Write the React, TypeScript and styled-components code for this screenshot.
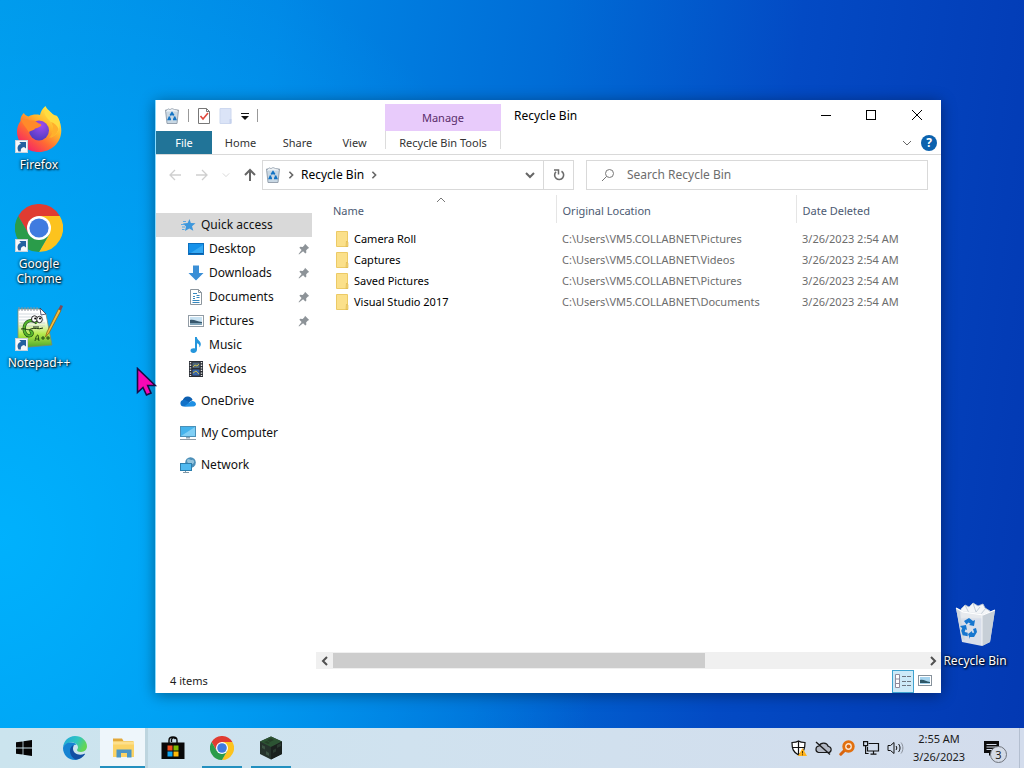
import React, { useState } from 'react'
import styled, { createGlobalStyle, css } from 'styled-components'

const colors = {
    text: '#1b1b1b',
    header: '#4c5a72',
    muted: '#6d6d6d',
    line: '#d9d9d9',
    accent: '#2390bf',
    file: '#217498',
    manage: '#e8cbfb',
    selected: '#d9d9d9'
}

const places = [
    { name: 'Desktop', icon: 'desktop', pinned: true },
    { name: 'Downloads', icon: 'downloads', pinned: true },
    { name: 'Documents', icon: 'documents', pinned: true },
    { name: 'Pictures', icon: 'pictures', pinned: true },
    { name: 'Music', icon: 'music', pinned: false },
    { name: 'Videos', icon: 'videos', pinned: false }
]

const files = [
    { name: 'Camera Roll', location: 'C:\\Users\\VM5.COLLABNET\\Pictures', deleted: '3/26/2023 2:54 AM' },
    { name: 'Captures', location: 'C:\\Users\\VM5.COLLABNET\\Videos', deleted: '3/26/2023 2:54 AM' },
    { name: 'Saved Pictures', location: 'C:\\Users\\VM5.COLLABNET\\Pictures', deleted: '3/26/2023 2:54 AM' },
    { name: 'Visual Studio 2017', location: 'C:\\Users\\VM5.COLLABNET\\Documents', deleted: '3/26/2023 2:54 AM' }
]

/* ---------- icons ---------- */

const ShortcutMark = () => (
    <g>
        <rect x="0.5" y="35.5" width="12" height="12" fill="#f6f8fa" stroke="#c9d3dc" />
        <path d="M3.500 46.500c-2-4-.5-7 2.500-7.500L4.300 37H11v6.500L9 42c-2 .5-3.500 1.500-3.200 4.500z" fill="#23609f" />
    </g>
)

const FirefoxIcon = () => (
    <svg width="48" height="48" viewBox="0 0 48 48">
        <defs>
            <linearGradient id="ffBody" x1="0.85" y1="0.1" x2="0.2" y2="0.95">
                <stop offset="0" stopColor="#fff04a" />
                <stop offset="0.35" stopColor="#ffb32c" />
                <stop offset="0.65" stopColor="#ff6a33" />
                <stop offset="1" stopColor="#f5206a" />
            </linearGradient>
            <radialGradient id="ffGlobe" cx="0.6" cy="0.25" r="0.8">
                <stop offset="0" stopColor="#a04bf0" />
                <stop offset="1" stopColor="#4b3bbd" />
            </radialGradient>
        </defs>
        <path d="M30.500 1c-3 2.500-5 6-5.500 9-4-1-8-.5-11.500 1.500C11 10.800 9.500 9.500 8.800 8 6 10.500 5.300 13.500 5.500 16 2.800 19.500 2 23.500 2 26.500 2 38.500 12 47 24 47s22.300-9 22.300-21.500c0-6-2-11.500-5-14.500.2 1.500.2 2.500 0 3.500C38.500 7.500 32.500 6 30.500 1z" fill="url(#ffBody)" />
        <path d="M30 3c-2 5 1 9 5 13 4 5 4 12 1 16.500 6.500-3 9.500-9 8.500-16-.5-2-1.200-4-2.500-5.500C40.500 10 33 9 30 3z" fill="#ffdc40" />
        <path d="M36 17c3 5 2.500 12-2 16 5-1 8-4 9.500-9-1-3-4-6-7.500-7z" fill="#ffb02c" />
        <circle cx="24" cy="25.500" r="10" fill="url(#ffGlobe)" />
        <path d="M6 15c4-1.500 7-1 9 .8 3-.8 5.500-.2 7 1.500 1.800 1.600 4 1.500 4.200 2.400.3 1.700-3.500 3.200-6 3.800-.8 1.600-3.500 2-6.500 3.500C11 22 8 20 6 15z" fill="#ff8a2a" />
        <ShortcutMark />
    </svg>
)

const ChromeLogo = () => (
    <g>
        <path d="M3.200 12A24 24 0 0 1 44.800 12L24 13 13.600 30z" fill="#e03c31" />
        <path d="M44.800 12A24 24 0 0 1 24 48L34.400 30 24 12z" fill="#fcc31e" />
        <path d="M24 48A24 24 0 0 1 3.200 12L13.600 30l20.800 0z" fill="#2a9c4a" />
        <circle cx="24" cy="24" r="12" fill="#fff" />
        <circle cx="24" cy="24" r="9.600" fill="#3f7be0" />
    </g>
)

const ChromeIcon = () => (
    <svg width="48" height="48" viewBox="0 0 48 48">
        <ChromeLogo />
        <ShortcutMark />
    </svg>
)

const NotepadIcon = () => (
    <svg width="48" height="48" viewBox="0 0 48 48">
        <defs>
            <linearGradient id="npPage" x1="0" y1="0" x2="0" y2="1">
                <stop offset="0.3" stopColor="#ffffff" />
                <stop offset="0.65" stopColor="#b5ea4c" />
                <stop offset="1" stopColor="#4fa82a" />
            </linearGradient>
        </defs>
        <path d="M3 6h23l5 5 6 31-28 2.500L3 40z" fill="url(#npPage)" stroke="#7a8a70" strokeWidth="0.8" />
        <path d="M25 5l6 6-5 1z" fill="#fff" stroke="#335" strokeWidth="0.8" />
        <path d="M4 11h20M4 14h24M4 17h25M4 20h26M4 23h26" stroke="#c0cad2" strokeWidth="0.7" />
        <path d="M4 4v4M7 4v4M10 4v4M13 4v4M16 4v4M19 4v4M22 4v4" stroke="#8b93a0" strokeWidth="1" />
        <path d="M22 20c-4-4-11-3-12.500 3-1.500 6 2 11 6 9.500 3-1.500 1.500-5-1-4" fill="none" stroke="#1c4a12" strokeWidth="3.2" />
        <path d="M22 20c-4-4-11-3-12.500 3-1.500 6 2 11 6 9.500 3-1.500 1.500-5-1-4" fill="none" stroke="#55b52e" strokeWidth="2" />
        <path d="M6 26c5-1 6 2 10 0s7 1 12-1M18 24h6" stroke="#17300f" strokeWidth="1" fill="none" />
        <ellipse cx="19.500" cy="16" rx="3" ry="3.200" fill="#fff" stroke="#111" strokeWidth="0.9" />
        <ellipse cx="24.500" cy="16.500" rx="2.800" ry="3.200" fill="#fff" stroke="#111" strokeWidth="0.9" />
        <circle cx="20.200" cy="15.500" r="1" />
        <circle cx="25" cy="15.500" r="1" />
        <path d="M20 38c1-5 2-6 3-6l1 6M21 36h3M26 35h4M28 33v4M31 35h4M33 33v4" stroke="#17420f" strokeWidth="0.9" fill="none" />
        <path d="M32 29L43.500 6l2.500 1.500L34 30l-3.500 4z" fill="#f2bd3f" stroke="#8a6414" strokeWidth="0.8" />
        <path d="M43.500 6l2-4 2.500 1-2 4.500z" fill="#7d4a58" />
        <ShortcutMark />
    </svg>
)

const BigBinIcon = () => (
    <svg width="48" height="48" viewBox="0 0 48 48">
        <path d="M10 8l4-4 4 2 4-4 5 3 5-2 2 4 5 3-3 7H10z" fill="#f4f6f8" stroke="#c3ccd6" strokeWidth="0.8" />
        <path d="M14 4l4 8M22 2l3 9 4-5M35 7l-5 6" stroke="#bcc7d3" strokeWidth="0.9" fill="none" />
        <path d="M5 7l7 3 22 3 10-4-5 32-8 4-20-4z" fill="#e6e9ed" fillOpacity="0.94" />
        <path d="M5 7l3 1 6 31-3-1z" fill="#cfd7df" />
        <path d="M31 14l13-5-5 32-8 4z" fill="#c7cfd7" />
        <path d="M5 7l7 4 20 3 12-5" fill="none" stroke="#fff" strokeWidth="1.2" />
        <path d="M31 14v30" stroke="#f4f6f8" />
        <g fill="#1676cf">
            <path d="M13 20l5-3 4 3 2-1-1 6-5-1 1.500-1.300-2-1.200-2 2z" />
            <path d="M9 25l6-1 1 5-1.500-.8-.8 2.800 3 .8v3.500l-5-1-1.500-4.500 1-2.500z" />
            <path d="M17 33l4-3 .2 1.800h2L22 28l3-1 1 4-3 5h-4v2z" />
        </g>
    </svg>
)

const BinIcon = () => (
    <svg width="16" height="16" viewBox="0 0 16 16">
        <path d="M1.500 2h13l-1.500 13.500H3z" fill="#c9d8e4" stroke="#8e9ba8" strokeWidth="0.9" />
        <path d="M1.500 3.500L4 .8l2 .8L8 .5l2.500 1 2 .3 2 1.700" fill="#eef2f5" stroke="#9aa6b2" strokeWidth="0.8" />
        <path d="M6.300 7.500L8 5l1.700 2.500M10.300 8.500l1.200 2.800H9M7 11.300H4.500l1.200-2.800" fill="none" stroke="#1273c4" strokeWidth="1.9" />
    </svg>
)

const FolderIcon = () => (
    <svg width="14" height="16" viewBox="0 0 14 16">
        <path d="M1.500.5h11v15h-11z" fill="#fbe08a" stroke="#ecca66" />
        <path d="M11.500 10l1.500 1.500v4h-2z" fill="#f6d572" stroke="#dcb54a" strokeWidth="0.6" />
    </svg>
)

const PinIcon = () => (
    <svg width="12" height="12" viewBox="0 0 12 12">
        <path d="M7 .8L11.200 5l-1.200.4-1.800 1.900.1 2.400-1 .8-2.200-2.300L1 11.500.6 11 3.600 7 1.400 4.800l.8-1 2.500.1L6.600 2z" fill="#8d9398" />
    </svg>
)

const SideIcon = ({ name }: { name: string }) => (
    <svg width="16" height="16" viewBox="0 0 16 16">
        {name === 'quick' && <g>
            <path d="M9.500 2l1.300 4 4.700.2-3.500 3 1.300 4.500-4-2.300L5 14l1-4.500-3-3 4.700-.4z" fill="#3d97dc" />
            <path d="M6 4.500H3M4 7.500H1M5 10H2M4.500 12.500H2" stroke="#5ba9e4" strokeWidth="1" />
        </g>}
        {name === 'desktop' && <g>
            <rect x="0.5" y="2.5" width="15" height="11" fill="#1692ea" stroke="#0d6fbe" />
            <path d="M1 13L15 4v9z" fill="#35a9f3" />
            <path d="M1 12.500h14" stroke="#0b5da5" />
        </g>}
        {name === 'downloads' && <path d="M5 .5h6V8h4.500L8 15.500.5 8H5z" fill="#3b8fd6" />}
        {name === 'documents' && <g>
            <path d="M2.500.5h8l3 3v12h-11z" fill="#fff" stroke="#8c969e" />
            <path d="M10.500.5v3h3" fill="none" stroke="#8c969e" />
            <path d="M5 4.500h4M5 7.500h2M8.500 6.500h3M8.500 8.500h3M5 9.500h2M4.500 11.500h7M4.500 13.500h7" stroke="#3687bd" />
        </g>}
        {name === 'pictures' && <g>
            <rect x="0.5" y="2.5" width="15" height="11" fill="#fff" stroke="#929ca5" />
            <rect x="2" y="4" width="12" height="8" fill="#c8e2f2" />
            <path d="M2 7c4-1 7 2 12 2v1H2z" fill="#37576d" />
            <path d="M2 10h12v2H2z" fill="#7fa3b8" />
        </g>}
        {name === 'music' && <path d="M7 0h1.800c.2 3 4 3.800 4 7 0 1.500-.6 2.600-1.500 3.600.6-2.500-.5-3.800-2.300-4.400V12.500C9 14.500 7.500 16 5.500 16S2.500 15 2.500 13.500 4.500 11 7 11.500z" fill="#2596dc" />}
        {name === 'videos' && <g>
            <rect x="1" y="0" width="14" height="16" fill="#2b2f36" />
            <path d="M2.500 1v14M13.500 1v14" stroke="#e6e6e6" strokeWidth="1.4" strokeDasharray="1.3 1.3" />
            <rect x="4.5" y="1.5" width="7" height="5.5" fill="#50687c" />
            <rect x="4.5" y="8.5" width="7" height="6" fill="#3865a8" />
            <path d="M5 6l2-2 2 1 2-2M5 12l3-2 3 3" stroke="#c9b94c" fill="none" />
        </g>}
        {name === 'onedrive' && <g>
            <path d="M2.500 8c.5-3 3-4.800 5.500-4.500 2 .1 4 1.500 4.600 3.500L8 10z" fill="#0d5fb0" />
            <path d="M3.500 13.500a3.300 3.300 0 0 1-.5-6.500c2-.3 3.500.5 5 1.500l5 4.500z" fill="#1272c8" />
            <path d="M4 13.500l6-4.500c1.500-1.800 5.500-1 6 2 0 1.600-1.300 2.500-2.500 2.500z" fill="#1f90e4" />
        </g>}
        {name === 'computer' && <g>
            <rect x="0.5" y="1.5" width="15" height="10" fill="#45b3ec" stroke="#4a90b8" />
            <path d="M1 11L15 2v9z" fill="#80cff5" />
            <path d="M6 12h4v1.500H6z" fill="#8ea4b2" />
            <path d="M0 14.500h16" stroke="#8b9aa5" />
        </g>}
        {name === 'network' && <g>
            <circle cx="10.500" cy="5.500" r="5.300" fill="#4c8fb8" />
            <path d="M7 3c2-2 3 0 4 0s2-1 3 1-2 4-4 3-3-1-3-4z" fill="#93c3dc" />
            <rect x="0.5" y="6.5" width="11" height="7" fill="#4fb9f0" stroke="#2c7fae" />
            <path d="M3 15.500h6M5.500 14v2" stroke="#7f98a8" />
        </g>}
    </svg>
)

const EdgeIcon = () => (
    <svg width="24" height="24" viewBox="0 0 24 24">
        <defs>
            <linearGradient id="edgeTop" x1="0" y1="0" x2="1" y2="0.400">
                <stop offset="0" stopColor="#1fa5dd" />
                <stop offset="0.600" stopColor="#2fc5c0" />
                <stop offset="1" stopColor="#63d655" />
            </linearGradient>
        </defs>
        <path d="M0 11.500C.5 5 5.500 0 12 0c7 0 12 5 12 10.300 0 3.500-2.500 5.700-6 5.700-2.500 0-4-1-4-2 0-.7 1-1 1-2.700C15 9 12.500 6.500 9 6.500c-4 0-8 2-9 5z" fill="url(#edgeTop)" />
        <path d="M0 12c.5-3.500 4-5.500 8-5.500 2.500 0 4.500.8 5.600 2.200-3-.5-5.100 2-5.100 5.300 0 5 4 9 10 7.300C16.500 23 14.500 24 12 24 5 24 0 18.500 0 12z" fill="#1683d2" />
        <path d="M9.500 9.500C5 13 7 21 12.500 23.500c4 .2 7.500-2 9.500-5.200.3-.6-.1-.8-.6-.5-5.200 2.400-11.400 0-11.400-5.300 0-1.200.3-2.200 1-3z" fill="#124fa3" />
    </svg>
)

const ExplorerIcon = () => (
    <svg width="24" height="24" viewBox="0 0 24 24">
        <path d="M2 2.500h9L12.500 5H22v5H2z" fill="#e2a83a" />
        <path d="M2 5.500h21v15.500H2z" fill="#fbd365" />
        <path d="M2 5.500h21v3H2z" fill="#fde08d" />
        <path d="M5.500 21.500v-8h15v8h-4.500V17h-6v4.500z" fill="#4b95c4" />
    </svg>
)

const StoreIcon = () => (
    <svg width="24" height="24" viewBox="0 0 24 24">
        <path d="M8 7V4.500C8 2 9.500 1 12 1s4 1 4 3.500V7M10.500 6V3.500C11 2 13 1 14.500 3" fill="none" stroke="#080808" strokeWidth="1.400" />
        <path d="M0.500 6.500h23v16.500h-23z" fill="#080808" />
        <path d="M6.500 9.500h5v5h-5z" fill="#f05022" />
        <path d="M12.500 9.500h5v5h-5z" fill="#7fba00" />
        <path d="M6.500 15.500h5v5h-5z" fill="#10a5ef" />
        <path d="M12.500 15.500h5v5h-5z" fill="#ffba08" />
    </svg>
)

const BlockIcon = () => (
    <svg width="24" height="24" viewBox="0 0 24 24">
        <path d="M12 0.500l11 5V18l-11 5.500L1 18V5.500z" fill="#25332c" />
        <path d="M12 .5l11 5-11 5.500L1 5.500z" fill="#2c5433" />
        <path d="M12 11v12.500L23 18V5.500z" fill="#1a211e" />
        <path d="M3 9l3 1.500v3L3 12zM7 15l3 2v3l-3-1.500z" fill="#3b5443" />
        <path d="M14 14l3-1.500v3L14 17zM18 9l4-2v3l-4 2z" fill="#2a3a30" />
        <path d="M8 4l4-2 3 2-4 2zM5 6l3-1 3 2-2 1z" fill="#243f28" />
    </svg>
)

const WindowsIcon = () => (
    <svg width="16" height="16" viewBox="0 0 16 16">
        <path d="M0 2.300L6.600 1.400V7.600H0zM7.400 1.300L16 0v7.600H7.400zM0 8.400h6.600v6.200L0 13.700zM7.400 8.400H16V16l-8.600-1.300z" fill="#050505" />
    </svg>
)

const CursorIcon = () => (
    <svg width="22" height="30" viewBox="0 0 22 30">
        <path d="M1.500 1.500v24l5.500-5 3.500 7.500 4.500-2-3.300-7.500h7.500z" fill="#f908b4" stroke="#1b0b45" strokeWidth="1.600" />
    </svg>
)

const ArrowIcon = ({ turn = 0 }: { turn?: number }) => (
    <svg width="14" height="14" viewBox="0 0 14 14">
        <path d="M7 13V2M2 7l5-5 5 5" transform={`rotate(${turn} 7 7)`} fill="none" stroke="currentColor" strokeWidth={turn ? 1.3 : 2} />
    </svg>
)

const ChevronIcon = ({ turn = 0, size = 10, weight = 1 }: { turn?: number; size?: number; weight?: number }) => (
    <svg width={size} height={size} viewBox="0 0 10 10">
        <path d="M1 3l4 4 4-4" transform={`rotate(${turn} 5 5)`} fill="none" stroke="currentColor" strokeWidth={weight} />
    </svg>
)

/* ---------- page ---------- */

function App() {
    const [view, setView] = useState('details')
    const [search, setSearch] = useState('')

    return (
        <Desktop>
            <GlobalStyle />
            <DesktopIcons>
                <Shortcut><FirefoxIcon /><span>Firefox</span></Shortcut>
                <Shortcut><ChromeIcon /><span>Google Chrome</span></Shortcut>
                <Shortcut><NotepadIcon /><span>Notepad++</span></Shortcut>
            </DesktopIcons>
            <BinCorner>
                <Shortcut><BigBinIcon /><span>Recycle Bin</span></Shortcut>
            </BinCorner>

            <Window>
                <TitleBar>
                    <QuickTools>
                        <BinIcon />
                        <Divider />
                        <ToolButton aria-label="Properties">
                            <svg width="14" height="16" viewBox="0 0 14 16">
                                <path d="M1.500.5h8l3 3v12h-11z" fill="#fff" stroke="#777" />
                                <path d="M9.500.5v3h3" fill="none" stroke="#777" />
                                <path d="M3.500 8l2.500 3 5-6" fill="none" stroke="#e0483c" strokeWidth="1.600" />
                            </svg>
                        </ToolButton>
                        <ToolButton aria-label="New folder">
                            <svg width="14" height="16" viewBox="0 0 14 16">
                                <path d="M1 .5h11v15H1z" fill="#dbe4f7" stroke="#cdd8ef" />
                                <path d="M10.500 11h2v4.500h-2z" fill="#c4d1ec" />
                            </svg>
                        </ToolButton>
                        <ToolButton aria-label="Customize toolbar">
                            <svg width="8" height="8" viewBox="0 0 8 8">
                                <path d="M0 1.500h8" stroke="#111" />
                                <path d="M0 4h8L4 8z" fill="#111" />
                            </svg>
                        </ToolButton>
                        <Divider />
                    </QuickTools>
                    <ManageTab>Manage</ManageTab>
                    <WindowTitle>Recycle Bin</WindowTitle>
                    <CaptionButtons>
                        <CaptionButton aria-label="Minimize">
                            <svg width="12" height="12" viewBox="0 0 12 12"><path d="M1 5.500h10" stroke="#000" /></svg>
                        </CaptionButton>
                        <CaptionButton aria-label="Maximize">
                            <svg width="12" height="12" viewBox="0 0 12 12"><rect x="0.5" y="0.5" width="9" height="9" fill="none" stroke="#000" /></svg>
                        </CaptionButton>
                        <CaptionButton aria-label="Close">
                            <svg width="12" height="12" viewBox="0 0 12 12"><path d="M0 0l10 10M10 0L0 10" stroke="#000" /></svg>
                        </CaptionButton>
                    </CaptionButtons>
                </TitleBar>

                <Ribbon>
                    <RibbonTab $file>File</RibbonTab>
                    <RibbonTab>Home</RibbonTab>
                    <RibbonTab>Share</RibbonTab>
                    <RibbonTab>View</RibbonTab>
                    <RibbonTab $tools>Recycle Bin Tools</RibbonTab>
                    <RibbonEnd>
                        <ToolButton aria-label="Expand the ribbon"><ChevronIcon /></ToolButton>
                        <HelpButton aria-label="Help">?</HelpButton>
                    </RibbonEnd>
                </Ribbon>

                <AddressRow>
                    <NavButtons>
                        <ToolButton $dim aria-label="Back"><ArrowIcon turn={-90} /></ToolButton>
                        <ToolButton $dim aria-label="Forward"><ArrowIcon turn={90} /></ToolButton>
                        <ToolButton $dim aria-label="Recent locations"><ChevronIcon size={8} /></ToolButton>
                        <ToolButton aria-label="Up"><ArrowIcon /></ToolButton>
                    </NavButtons>
                    <AddressBox>
                        <BinIcon />
                        <ChevronIcon turn={-90} size={8} weight={2} />
                        <Crumb>Recycle Bin</Crumb>
                        <ChevronIcon turn={-90} size={8} weight={2} />
                        <DropButton aria-label="Previous locations"><ChevronIcon weight={2} /></DropButton>
                    </AddressBox>
                    <RefreshButton aria-label="Refresh">
                        <svg width="12" height="12" viewBox="0 0 12 12">
                            <path d="M8.500 2.200A4.500 4.500 0 1 1 3 2.800" fill="none" stroke="#6b6b6b" strokeWidth="1.600" />
                            <path d="M1 1h4.500v4.500" fill="none" stroke="#6b6b6b" strokeWidth="1.500" />
                        </svg>
                    </RefreshButton>
                    <SearchBox>
                        <svg width="14" height="14" viewBox="0 0 14 14">
                            <circle cx="8.500" cy="5.500" r="4" fill="none" stroke="#777" />
                            <path d="M5.500 8.500L1 13" stroke="#777" />
                        </svg>
                        <input aria-label="Search Recycle Bin" placeholder="Search Recycle Bin" value={search}
                            onChange={e => setSearch(e.target.value)} />
                    </SearchBox>
                </AddressRow>

                <Body>
                    <SideBar>
                        <SideLink href="#quick" $active><SideIcon name="quick" /><span>Quick access</span></SideLink>
                        {places.map(p => (
                            <SideLink href={`#${p.icon}`} $child key={p.name}>
                                <SideIcon name={p.icon} /><span>{p.name}</span>
                                {p.pinned && <PinIcon />}
                            </SideLink>
                        ))}
                        <SideLink href="#onedrive" $root><SideIcon name="onedrive" /><span>OneDrive</span></SideLink>
                        <SideLink href="#computer" $root><SideIcon name="computer" /><span>My Computer</span></SideLink>
                        <SideLink href="#network" $root><SideIcon name="network" /><span>Network</span></SideLink>
                    </SideBar>
                    <Content>
                        <FileTable>
                            <colgroup>
                                <NameCol />
                                <LocationCol />
                                <col />
                            </colgroup>
                            <thead>
                                <tr>
                                    <th>Name<SortMark><ChevronIcon turn={180} /></SortMark></th>
                                    <th>Original Location</th>
                                    <th>Date Deleted</th>
                                </tr>
                            </thead>
                            <tbody>
                                {files.map(f => (
                                    <tr key={f.name}>
                                        <td><FileName><FolderIcon />{f.name}</FileName></td>
                                        <td>{f.location}</td>
                                        <td>{f.deleted}</td>
                                    </tr>
                                ))}
                            </tbody>
                        </FileTable>
                        <ScrollBar>
                            <ScrollButton aria-label="Scroll left"><ChevronIcon turn={90} weight={2} /></ScrollButton>
                            <ScrollTrack><ScrollThumb /></ScrollTrack>
                            <ScrollButton aria-label="Scroll right"><ChevronIcon turn={-90} weight={2} /></ScrollButton>
                        </ScrollBar>
                    </Content>
                </Body>

                <StatusBar>
                    <span>4 items</span>
                    <ViewButtons>
                        <ViewButton aria-label="Details" $on={view === 'details'} onClick={() => setView('details')}>
                            <svg width="18" height="14" viewBox="0 0 18 14">
                                <path d="M1.500.5h4v13h-4zM1.500 5h4M1.500 9.500h4" fill="#fff" stroke="#8f8a9c" />
                                <path d="M8 2.500h4M13 2.500h4M8 7.500h4M13 7.500h4M8 11.500h4M13 11.500h4" stroke="#6d7580" />
                            </svg>
                        </ViewButton>
                        <ViewButton aria-label="Large icons" $on={view === 'large'} onClick={() => setView('large')}>
                            <svg width="14" height="12" viewBox="0 0 14 12">
                                <rect x="0.5" y="0.5" width="13" height="10" fill="#fff" stroke="#87929c" />
                                <rect x="2" y="2" width="10" height="7" fill="#a5d3ee" />
                                <path d="M2 5c4-1 6 2 10 2v1H2z" fill="#2c5668" />
                            </svg>
                        </ViewButton>
                    </ViewButtons>
                </StatusBar>
            </Window>

            <Pointer><CursorIcon /></Pointer>

            <TaskBar>
                <StartButton aria-label="Start"><WindowsIcon /></StartButton>
                <TaskButton aria-label="Microsoft Edge"><EdgeIcon /></TaskButton>
                <TaskButton aria-label="File Explorer" $active><ExplorerIcon /></TaskButton>
                <TaskButton aria-label="Microsoft Store"><StoreIcon /></TaskButton>
                <TaskButton aria-label="Google Chrome" $running>
                    <svg width="24" height="24" viewBox="0 0 48 48"><ChromeLogo /></svg>
                </TaskButton>
                <TaskButton aria-label="Game" $running><BlockIcon /></TaskButton>
                <Tray>
                    <TrayButton aria-label="Security">
                        <svg width="16" height="16" viewBox="0 0 16 16">
                            <path d="M7.500 1C9.500 2.500 12 2.500 14 2.500c0 6-1 9.500-6.500 12.500C2 12 1 8.500 1 2.500c2 0 4.500 0 6.500-1.500zM7.500 1v14M1 7.500h13" fill="#fff" stroke="#111" strokeWidth="1.200" />
                            <path d="M11.500 8l4.500 8H7z" fill="#ffb41f" />
                            <path d="M11.500 11v2.500M11.500 14.300v1" stroke="#4b3300" />
                        </svg>
                    </TrayButton>
                    <TrayButton aria-label="OneDrive offline">
                        <svg width="18" height="16" viewBox="0 0 18 16">
                            <path d="M4.500 12.500h9.500a3 3 0 0 0 .3-6A5 5 0 0 0 5 6a3.300 3.300 0 0 0-.5 6.500z" fill="#b2b8c4" stroke="#1a1a1a" strokeWidth="1.200" />
                            <path d="M2 2l14 12.500" stroke="#1a1a1a" strokeWidth="1.400" />
                        </svg>
                    </TrayButton>
                    <TrayButton aria-label="Search tool">
                        <svg width="16" height="16" viewBox="0 0 16 16">
                            <path d="M6.500 9.500L1.800 14.200" stroke="#d8640f" strokeWidth="3" strokeLinecap="round" />
                            <circle cx="9.500" cy="6.500" r="4.800" fill="#fbe6d0" stroke="#e2700f" strokeWidth="2.800" />
                            <circle cx="9.500" cy="6.500" r="2" fill="#d8640f" />
                        </svg>
                    </TrayButton>
                    <TrayButton aria-label="Network">
                        <svg width="17" height="16" viewBox="0 0 17 16">
                            <path d="M5.500 3.500h10v7.500h-11V7M10.500 11v3M7.500 14.200h6" fill="none" stroke="#111" strokeWidth="1.200" />
                            <path d="M.6 1.600h4v4h-4zM2.600 6v8M2.600 13.500h3" fill="none" stroke="#111" strokeWidth="1.200" />
                        </svg>
                    </TrayButton>
                    <TrayButton aria-label="Volume">
                        <svg width="17" height="16" viewBox="0 0 17 16">
                            <path d="M1 5.500h2.500L7 2.500v11L3.500 10.500H1z" fill="none" stroke="#111" />
                            <path d="M9 6c1 1.200 1 2.800 0 4M11.500 4c2 2.300 2 5.700 0 8" fill="none" stroke="#111" />
                            <path d="M14 2.500c2.500 3 2.500 8 0 11" fill="none" stroke="#8b919b" />
                        </svg>
                    </TrayButton>
                    <Clock><span>2:55 AM</span><span>3/26/2023</span></Clock>
                    <NoticeButton aria-label="Notifications">
                        <svg width="18" height="17" viewBox="0 0 18 17">
                            <path d="M1 1h15v12H9l-3 3v-3H1z" fill="#0c0c0c" />
                            <path d="M3.500 4.500h10M3.500 7h10M3.500 9.500h7" stroke="#d4dbe8" />
                        </svg>
                        <NoticeCount>3</NoticeCount>
                    </NoticeButton>
                </Tray>
            </TaskBar>
        </Desktop>
    )
}

const GlobalStyle = createGlobalStyle`
* { box-sizing: border-box; }
body {
    margin: 0;
    overflow: hidden;
}
body, button, input, table {
    font-family: "Noto Sans", "Open Sans", sans-serif;
    font-size: 12px;
    line-height: 16px;
    color: ${colors.text};
}
button {
    border: none;
    padding: 0;
    background: none;
}
svg { flex: none; display: block; }
`

const Desktop = styled.main`
position: relative;
display: flex;
flex-direction: column;
justify-content: flex-end;
height: 100vh;
background:
    radial-gradient(ellipse 80% 110% at 0% 70%, rgba(0, 180, 255, .9), rgba(0, 150, 245, 0) 75%),
    linear-gradient(97deg, #0098ea 0%, #0088e6 25%, #006cd6 50%, #034ac4 72%, #0338b2 100%);
`

const DesktopIcons = styled.div`
position: absolute;
left: 1px;
top: 102px;
display: grid;
grid-auto-rows: 99px;
`

const BinCorner = styled.div`
position: absolute;
right: 11px;
bottom: 97px;
`

const Shortcut = styled.button`
display: flex;
flex-direction: column;
align-items: center;
justify-content: flex-start;
gap: 4px;
width: 76px;
padding: 3px 0;
color: #fff;
line-height: 15px;
text-align: center;
text-shadow: 1px 1px 2px #000, 0 0 3px rgba(0, 0, 0, .9);
span { padding: 0 4px; }
`

const Window = styled.section`
position: absolute;
left: 155px;
right: 83px;
top: 100px;
bottom: 75px;
display: flex;
flex-direction: column;
background: #fff;
border-left: 1px solid #8adcff;
box-shadow: 0 2px 14px rgba(0, 0, 0, .4);
`

const TitleBar = styled.header`
display: flex;
height: 31px;
`

const QuickTools = styled.div`
display: flex;
align-items: center;
gap: 8px;
width: 229px;
padding-left: 8px;
`

const Divider = styled.span`
width: 1px;
height: 13px;
background: #999;
`

const ToolButton = styled.button<{ $dim?: boolean }>`
display: flex;
align-items: center;
justify-content: center;
color: ${p => p.$dim ? '#cfcfcf' : '#666'};
`

const ManageTab = styled.div`
width: 116px;
margin-top: 4px;
background: ${colors.manage};
color: #5a2d6b;
font-size: 11px;
line-height: 28px;
text-align: center;
`

const WindowTitle = styled.div`
padding-left: 13px;
color: #000;
line-height: 32px;
`

const CaptionButtons = styled.div`
display: flex;
margin-left: auto;
`

const CaptionButton = styled.button`
display: flex;
align-items: center;
justify-content: center;
width: 46px;
&:hover { background: #e5e5e5; }
`

const Ribbon = styled.nav`
display: flex;
height: 24px;
border-bottom: 1px solid ${colors.line};
`

const RibbonTab = styled.button<{ $file?: boolean; $tools?: boolean }>`
width: 57px;
color: #333;
font-size: 11px;
${p => p.$file && css`
    width: 56px;
    background: ${colors.file};
    color: #fff;
`}
${p => p.$tools && css`
    width: 116px;
    height: 18px;
    padding-top: 6px;
    margin-left: 2px;
    line-height: 12px;
    white-space: nowrap;
    border: solid #dcdcdc;
    border-width: 0 1px;
`}
`

const RibbonEnd = styled.div`
display: flex;
align-items: center;
gap: 9px;
margin-left: auto;
padding-right: 4px;
`

const HelpButton = styled.button`
width: 16px;
height: 16px;
border-radius: 50%;
background: #0b62ae;
color: #fff;
font-weight: 700;
`

const AddressRow = styled.div`
display: flex;
align-items: center;
height: 40px;
padding-right: 13px;
`

const NavButtons = styled.div`
display: flex;
align-items: center;
gap: 13px;
width: 106px;
padding-left: 12px;
`

const AddressBox = styled.div`
display: flex;
align-items: center;
flex: 278;
gap: 6px;
height: 30px;
padding-left: 2px;
border: 1px solid ${colors.line};
color: #666;
`

const Crumb = styled.button`
color: #000;
`

const DropButton = styled.button`
display: flex;
margin-left: auto;
padding: 8px;
color: inherit;
`

const RefreshButton = styled.button`
display: flex;
align-items: center;
justify-content: center;
width: 30px;
height: 30px;
border: 1px solid ${colors.line};
border-left: none;
`

const SearchBox = styled.label`
display: flex;
align-items: center;
flex: 326;
gap: 12px;
height: 30px;
margin-left: 12px;
padding-left: 14px;
border: 1px solid ${colors.line};
input {
    flex: 1;
    min-width: 0;
    border: none;
    outline: none;
    background: none;
    padding: 0;
}
input::placeholder { color: #6d6d6d; }
`

const Body = styled.div`
display: flex;
flex: 1;
min-height: 0;
`

const SideBar = styled.nav`
display: flex;
flex-direction: column;
width: 160px;
padding-top: 18px;
`

const SideLink = styled.a<{ $active?: boolean; $child?: boolean; $root?: boolean }>`
display: flex;
align-items: center;
gap: 5px;
height: 24px;
padding-left: ${p => p.$child ? 32 : 24}px;
margin-right: 4px;
margin-top: ${p => p.$root ? 8 : 0}px;
background: ${p => p.$active ? colors.selected : 'transparent'};
color: #111;
text-decoration: none;
span { flex: 1; }
svg + span + svg { margin-right: 2px; }
`

const Content = styled.div`
display: flex;
flex-direction: column;
justify-content: space-between;
flex: 1;
min-width: 0;
`

const FileTable = styled.table`
table-layout: fixed;
width: 100%;
border-collapse: collapse;
font-size: 11px;
white-space: nowrap;
th {
    position: relative;
    height: 28px;
    padding: 3px 6px 0;
    border-right: 1px solid #e5e5e5;
    color: ${colors.header};
    font-weight: 400;
    text-align: left;
}
th:first-child { padding-left: 17px; }
th:last-child { border-right: none; }
tbody::before {
    content: "";
    display: block;
    height: 5px;
}
td {
    height: 21px;
    padding: 0 6px;
    color: ${colors.muted};
}
td:first-child {
    padding-left: 19px;
    color: #000;
}
`

const NameCol = styled.col`
width: 240px;
`

const LocationCol = styled.col`
width: 240px;
`

const SortMark = styled.span`
position: absolute;
left: 120px;
top: 0;
color: #777;
`

const FileName = styled.span`
display: flex;
align-items: center;
gap: 5px;
`

const ScrollBar = styled.div`
display: flex;
height: 17px;
background: #f0f0f0;
`

const ScrollButton = styled.button`
display: flex;
align-items: center;
justify-content: center;
width: 17px;
color: #505050;
`

const ScrollTrack = styled.div`
flex: 1;
padding: 1px 0;
`

const ScrollThumb = styled.div`
width: 63%;
height: 100%;
background: #cdcdcd;
`

const StatusBar = styled.footer`
display: flex;
align-items: center;
justify-content: space-between;
height: 24px;
padding-left: 14px;
font-size: 11px;
`

const ViewButtons = styled.div`
display: flex;
padding-right: 5px;
`

const ViewButton = styled.button<{ $on: boolean }>`
display: flex;
align-items: center;
justify-content: center;
width: 22px;
height: 23px;
${p => p.$on && css`
    border: 1px solid #3fa3d0;
    background: #cdeaf8;
`}
`

const Pointer = styled.div`
position: absolute;
left: 136px;
top: 367px;
pointer-events: none;
`

const TaskBar = styled.footer`
display: flex;
gap: 1px;
height: 40px;
background: linear-gradient(90deg, #cbe4ee 0%, #d0e2ef 40%, #d3dcec 100%);
`

const StartButton = styled.button`
display: flex;
align-items: center;
width: 50px;
padding-left: 16px;
`

const TaskButton = styled.button<{ $active?: boolean; $running?: boolean }>`
display: flex;
align-items: center;
justify-content: center;
width: 48px;
${p => p.$active && css`
    border-right: 3px solid #bdd5df;
    background: linear-gradient(#eef6fb 38px, ${colors.accent} 38px);
`}
${p => p.$running && css`
    background: linear-gradient(${colors.accent}, ${colors.accent}) center bottom / 40px 2px no-repeat;
`}
`

const Tray = styled.div`
display: flex;
align-items: center;
margin-left: auto;
`

const TrayButton = styled.button`
display: flex;
align-items: center;
justify-content: center;
width: 24px;
height: 40px;
`

const Clock = styled.time`
display: flex;
flex-direction: column;
align-items: center;
width: 64px;
font-size: 11px;
line-height: 18px;
`

const NoticeButton = styled.button`
position: relative;
width: 49px;
height: 40px;
margin-right: 4px;
padding-left: 12px;
border-right: 1px solid #b4bfd0;
`

const NoticeCount = styled.span`
position: absolute;
left: 19px;
top: 18px;
width: 17px;
height: 17px;
border: 1px solid #70757d;
border-radius: 50%;
background: #d3dae6;
font-size: 11px;
line-height: 15px;
`

export default App
